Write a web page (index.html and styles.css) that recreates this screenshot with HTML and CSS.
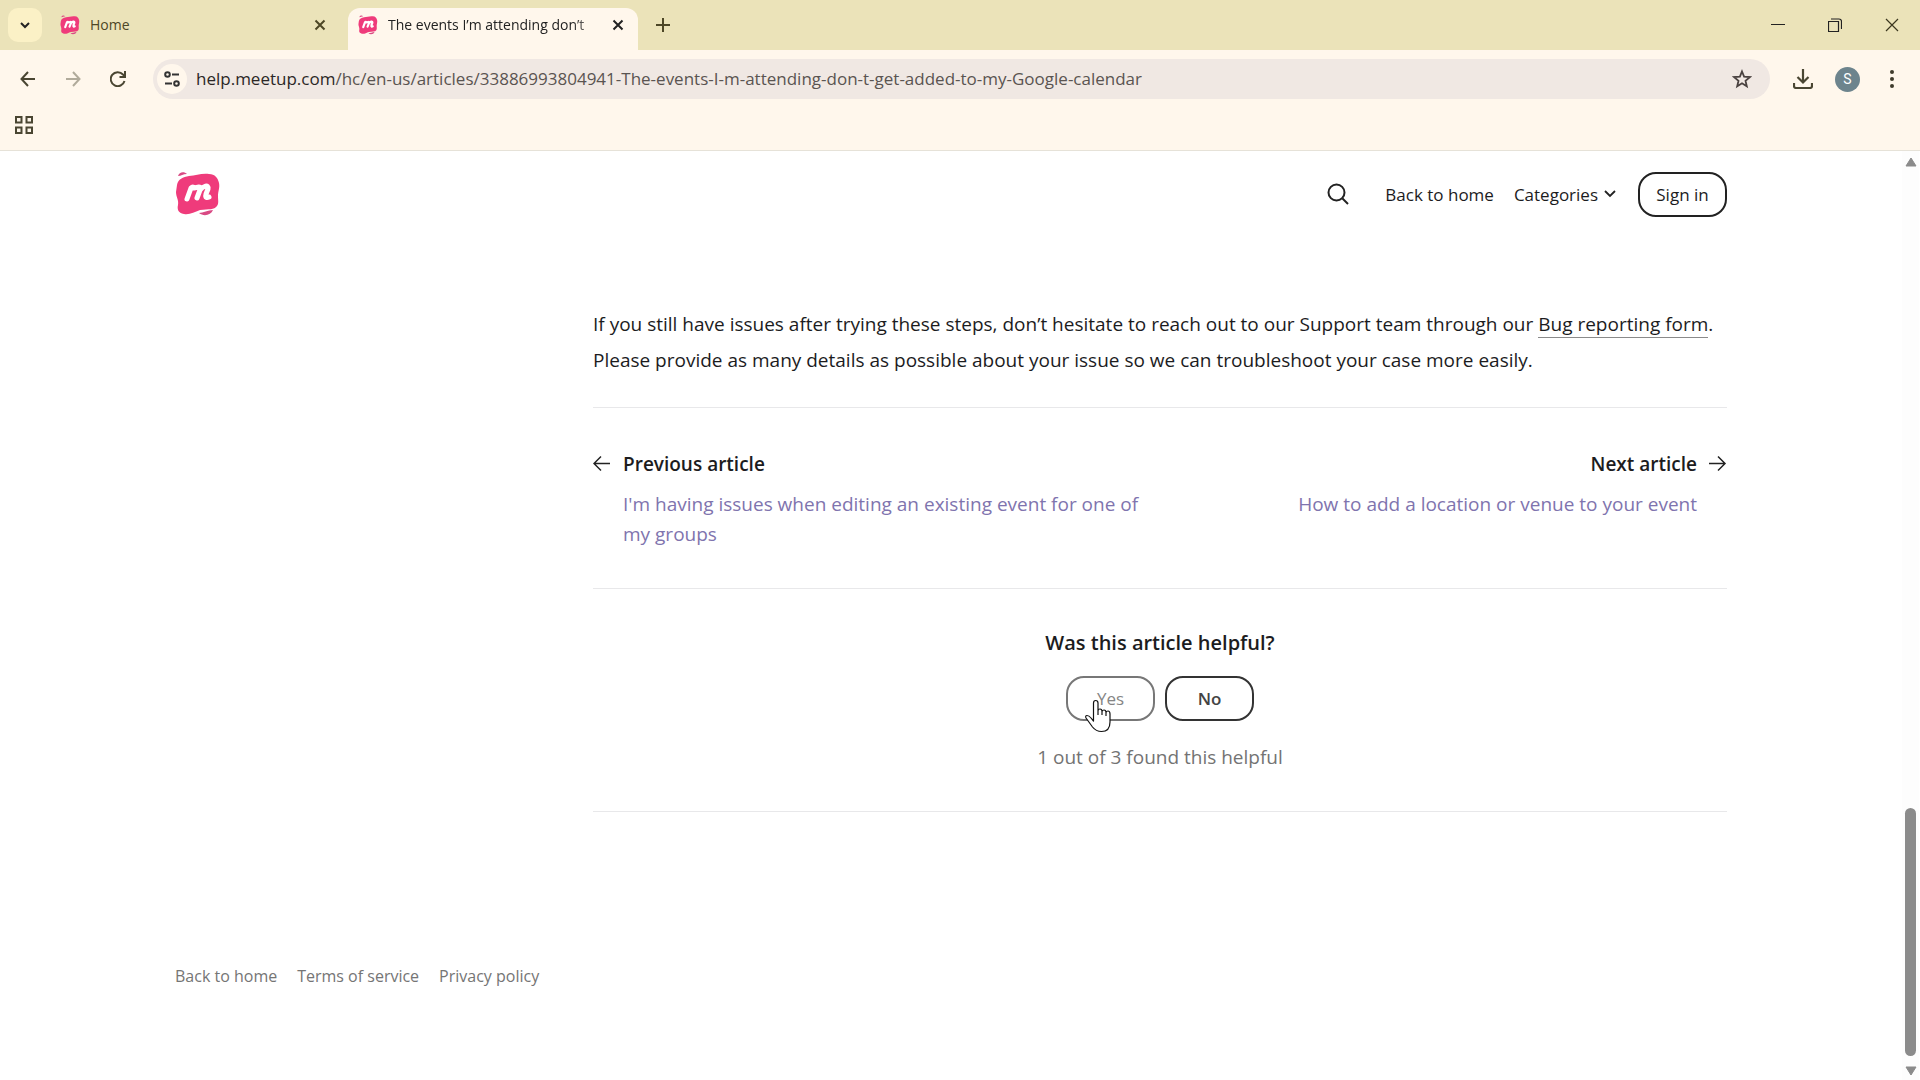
FILE: index.html
```html
<!DOCTYPE html>
<html lang="en">
<head>
<meta charset="utf-8">
<title>The events I’m attending don’t get added to my Google calendar</title>
<link rel="stylesheet" href="styles.css">
</head>
<body>
<svg class="defs" width="0" height="0" aria-hidden="true">
  <symbol id="logo" viewBox="0 0 46 46">
    <path fill="#ef3b7b" d="M2 14C3 8 8 6 14 5C21 5 26 2 34 3C40 3 43 7 44 12C45 17 43 20 43 25C43 30 44 32 42 35C39 39 34 38 25 39C19 41 15 44 9 43C3 42 2 38 3 34C4 29 1 26 1 21Z"/>
    <path fill="#d94a84" d="M3 5C4 1 9 0 12 3C8 3 6 5 3 5ZM24 42C28 42 33 39 38 39C36 44 29 46 24 42Z"/>
    <path fill="none" stroke="#fff" stroke-width="5" stroke-linecap="round" stroke-linejoin="round" d="M12 28L16 17Q18 15 19 17L24 16Q26 16 25 19L22 27M25 19C28 15 34 13 33 18L31 23C30 27 32 27 34 26"/>
  </symbol>
</svg>

<div class="browser">
  <header class="chrome">
    <div class="tabstrip">
      <button class="tab-search" aria-label="Search tabs"><svg width="12" height="12" viewBox="0 0 12 12"><path d="M2 4l4 4 4-4" fill="none" stroke="#222" stroke-width="2"/></svg></button>
      <div class="tab">
        <svg class="favicon"><use href="#logo"/></svg>
        <span class="tab-title">Home</span>
        <button class="tab-close" aria-label="Close Home"><svg width="12" height="12" viewBox="0 0 12 12"><path d="M1.500 1.500l9 9m0-9l-9 9" stroke="#4d4726" stroke-width="2"/></svg></button>
      </div>
      <div class="tab tab-active">
        <svg class="favicon"><use href="#logo"/></svg>
        <span class="tab-title">The events I’m attending don’t</span>
        <button class="tab-close" aria-label="Close tab"><svg width="12" height="12" viewBox="0 0 12 12"><path d="M1.500 1.500l9 9m0-9l-9 9" stroke="#222" stroke-width="2"/></svg></button>
      </div>
      <button class="new-tab" aria-label="New tab"><svg width="14" height="14" viewBox="0 0 14 14"><path d="M7 0v14M0 7h14" stroke="#4d4726" stroke-width="2"/></svg></button>
      <div class="window-controls">
        <button aria-label="Minimize"><svg width="14" height="14" viewBox="0 0 14 14"><path d="M0 6.500h14" stroke="#222"/></svg></button>
        <button aria-label="Restore"><svg width="14" height="14" viewBox="0 0 14 14"><path d="M.5 3.500h10v10H.5zM3 1h8q2.500 0 2.500 2.500V11" fill="none" stroke="#222" stroke-width="1.200"/></svg></button>
        <button aria-label="Close"><svg width="14" height="14" viewBox="0 0 14 14"><path d="M1 1l12 12M13 1L1 13" stroke="#3b371f" stroke-width="1.200"/></svg></button>
      </div>
    </div>
    <div class="toolbar">
      <button aria-label="Back"><svg width="16" height="16" viewBox="0 0 16 16"><path d="M15 8H2M8 1L1.500 8 8 15" fill="none" stroke="#4a4632" stroke-width="2"/></svg></button>
      <button aria-label="Forward"><svg width="16" height="16" viewBox="0 0 16 16"><path d="M1 8h13M8 1l6.500 7L8 15" fill="none" stroke="#b1ab9b" stroke-width="2"/></svg></button>
      <button aria-label="Reload"><svg width="16" height="16" viewBox="0 0 16 16"><path d="M14.500 10A7 7 0 1 1 13 3.500L14.500 5M15 0v6H9.500" fill="none" stroke="#4a4632" stroke-width="2"/></svg></button>
      <div class="omnibox">
        <button class="site-info" aria-label="Site information"><svg width="16" height="16" viewBox="0 0 16 16"><g fill="none" stroke="#333" stroke-width="2"><circle cx="3.500" cy="3.500" r="2.300"/><circle cx="12.500" cy="12.500" r="2.300"/><path d="M8 3.500h7M1 12.500h7"/></g></svg></button>
        <a class="url" href="#article"><span>help.meetup.com</span>/hc/en-us/articles/33886993804941-The-events-I-m-attending-don-t-get-added-to-my-Google-calendar</a>
        <button class="bookmark" aria-label="Bookmark this tab"><svg width="20" height="20" viewBox="0 0 20 20"><path d="M10 2.500l2.100 5.200 5.700.4-4.300 3.700 1.300 5.500L10 14.300l-4.800 3 1.300-5.500L2.200 8.100l5.700-.4z" fill="none" stroke="#4a4240" stroke-width="1.800"/></svg></button>
      </div>
      <button class="download" aria-label="Downloads"><svg width="20" height="20" viewBox="0 0 20 20"><path d="M10 0v13M4.500 8l5.500 5.500L15.500 8M1 14v3q0 2 2 2h14q2 0 2-2v-3" fill="none" stroke="#4a4632" stroke-width="2.200"/></svg></button>
      <button class="avatar" aria-label="Profile">S</button>
      <button class="menu" aria-label="Menu"><svg width="6" height="18" viewBox="0 0 6 18"><g fill="#3f3b2c"><circle cx="3" cy="2" r="2"/><circle cx="3" cy="9" r="2"/><circle cx="3" cy="16" r="2"/></g></svg></button>
    </div>
    <div class="bookmarks">
      <button aria-label="Apps"><svg width="18" height="18" viewBox="0 0 18 18"><path d="M1 1h5.500v5.500H1zM11.500 1H17v5.500h-5.500zM1 11.500h5.500V17H1zM11.500 11.500H17V17h-5.500z" fill="none" stroke="#4a4632" stroke-width="2"/></svg></button>
    </div>
  </header>

  <div class="viewport">
    <div class="page">
      <div class="site-header wrap">
        <a class="brand" href="#home" aria-label="Meetup"><svg width="46" height="46"><use href="#logo"/></svg></a>
        <nav class="site-nav">
          <button class="search" aria-label="Search"><svg width="22" height="22" viewBox="0 0 22 22"><path d="M15.500 15.500L21 21" stroke="#222" stroke-width="2"/><circle cx="9.500" cy="9.500" r="8" fill="none" stroke="#222" stroke-width="2"/></svg></button>
          <a href="#home">Back to home</a>
          <button class="categories">Categories <svg width="12" height="8" viewBox="0 0 12 8"><path d="M1 1l5 5 5-5" fill="none" stroke="#222" stroke-width="1.800"/></svg></button>
          <button class="pill">Sign in</button>
        </nav>
      </div>
      <main class="wrap">
        <article class="article" id="article">
          <p class="body-text">If you still have issues after trying these steps, don’t hesitate to reach out to our Support team through our <a href="#bug">Bug reporting form</a>.<br>Please provide as many details as possible about your issue so we can troubleshoot your case more easily.</p>
          <nav class="siblings" aria-label="Articles">
            <div class="sibling">
              <svg width="18" height="30" viewBox="0 0 18 30"><path d="M17 14.500H2M8 7.500l-7 7 7 7" fill="none" stroke="#222" stroke-width="1.500"/></svg>
              <div><h2>Previous article</h2><a href="#previous">I'm having issues when editing an existing event for one of<br>my groups</a></div>
            </div>
            <div class="sibling next">
              <div><h2>Next article</h2><a href="#next">How to add a location or venue to your event</a></div>
              <svg width="18" height="30" viewBox="0 0 18 30"><path d="M0 14.500h15M9 7.500l7 7-7 7" fill="none" stroke="#222" stroke-width="1.500"/></svg>
            </div>
          </nav>
          <section class="vote">
            <h2>Was this article helpful?</h2>
            <div class="vote-buttons">
              <button class="pill yes">Yes
                <svg class="pointer" width="27" height="34" viewBox="0 0 27 34"><path d="M9.500 22V4Q9.500 1.500 11.700 1.500Q14 1.500 14 4V12Q14 10 16 10Q18 10 18 12.500Q18.500 11 20 11Q22 11 22 13.500Q22.500 12 24 12Q26 12 26 15V23Q26 32.500 17.500 32.500Q12 32.500 8.500 28L2 19Q1 16.500 3 16.500Q5 16.500 7 19ZM14 11v5M18 12v4M22 13v4" fill="#fff" stroke="#111" stroke-width="1.200" stroke-linejoin="round"/></svg>
              </button>
              <button class="pill no">No</button>
            </div>
            <p>1 out of 3 found this helpful</p>
          </section>
        </article>
      </main>
      <footer class="site-footer wrap">
        <a href="#home">Back to home</a><a href="#terms">Terms of service</a><a href="#privacy">Privacy policy</a>
      </footer>
    </div>
    <div class="scrollbar" aria-hidden="true">
      <svg width="12" height="10" viewBox="0 0 12 10"><path d="M6 1l5 8H1z" fill="#8b8b8b" stroke="#8b8b8b" stroke-linejoin="round"/></svg>
      <div class="track"><div class="thumb"></div></div>
      <svg width="12" height="10" viewBox="0 0 12 10"><path d="M6 9l5-8H1z" fill="#8b8b8b" stroke="#8b8b8b" stroke-linejoin="round"/></svg>
    </div>
  </div>
</div>
</body>
</html>
```
FILE: styles.css
```css
* { box-sizing: border-box; }
body { margin: 0; color: #1c1c1e; font-family: "Open Sans", "Noto Sans", sans-serif; background: #fff; }
button { padding: 0; border: 0; background: none; color: inherit; font: inherit; display: flex; align-items: center; justify-content: center; flex: none; }
a { color: inherit; text-decoration: none; }
h2, p { margin: 0; }
svg { flex: none; display: block; }
.defs { position: absolute; }

.browser { min-height: 100vh; display: flex; flex-direction: column; }
.chrome { background: #fff7ec; border-bottom: 1px solid #e6e2d8; }
.tabstrip { height: 50px; padding-left: 8px; display: flex; background: #ebe3b9; }
.tab-search { width: 34px; height: 34px; margin-top: 8px; border-radius: 10px; background: #fbf1c6; }
.tab { width: 290px; height: 42px; margin-top: 8px; padding: 0 10px 8px; display: flex; align-items: center; gap: 10px; border-radius: 12px 12px 0 0; font-size: 14px; color: #4d4726; }
.tab:not(.tab-active) { margin: 8px 8px 0; }
.favicon { width: 20px; height: 20px; }
.tab-title { flex: 1; white-space: nowrap; line-height: 24px; }
.tab-active { background: #fff7ec; color: #222; }
.tab-active .tab-title { -webkit-mask-image: linear-gradient(90deg, #000 88%, #0005); mask-image: linear-gradient(90deg, #000 88%, #0005); }
.tab-close { width: 20px; height: 20px; }
.new-tab { width: 50px; }
.window-controls { margin-left: auto; display: flex; }
.window-controls button { width: 57px; }

.toolbar { height: 58px; padding: 0 18px; display: flex; align-items: center; }
.toolbar > button { width: 20px; height: 36px; margin-right: 25px; }
.omnibox { flex: 1; height: 40px; padding: 0 18px 0 4px; display: flex; align-items: center; border-radius: 20px; background: #f0e8e3; }
.site-info { width: 30px; height: 30px; border-radius: 50%; background: #fff7ec; }
.url { flex: 1; min-width: 0; margin-left: 9px; overflow: hidden; white-space: nowrap; font-size: 17px; line-height: 28px; color: #5a5451; }
.url span { color: #2b2726; }
.toolbar > .download { margin: 0 22px 0 23px; }
.toolbar > .avatar { width: 25px; height: 25px; margin-right: 20px; border-radius: 50%; background: #6d848d; color: #fff; font-family: Roboto, sans-serif; font-size: 14px; }
.toolbar > .menu { width: 24px; margin-right: -2px; }
.bookmarks { height: 42px; padding: 0 15px; display: flex; align-items: center; }
.bookmarks button { margin-bottom: 8px; }

.viewport { flex: 1; display: flex; }
.page { flex: 1; min-width: 0; display: flex; flex-direction: column; }
.wrap { width: 100%; max-width: 1616px; margin: 0 auto; padding: 0 32px; }
.site-header { height: 86px; display: flex; align-items: center; justify-content: space-between; }
.site-nav { display: flex; align-items: center; font-size: 17px; font-weight: 500; }
.search { margin-right: 36px; }
.categories { gap: 6px; margin: 0 22px 0 20px; }
.pill { width: 89px; height: 45px; border: 2px solid #222; border-radius: 18px; }
.article { margin-left: auto; width: 1134px; max-width: 100%; }
.body-text { padding: 69px 0 29px; font-size: 19px; line-height: 36px; }
.body-text a { border-bottom: 1px solid #8a8a8a; }
.siblings { display: flex; justify-content: space-between; padding: 41px 0 39px; border: 1px solid #e8e8ea; border-width: 1px 0; }
.sibling { display: flex; gap: 12px; font-size: 19px; line-height: 30px; color: #7f74ae; }
.sibling h2 { margin-bottom: 10px; font-size: 19px; font-weight: 600; line-height: 30px; color: #1c1c1e; }
.next { text-align: right; }
.vote { display: flex; flex-direction: column; align-items: center; padding: 38px 0; border-bottom: 1px solid #e8e8ea; }
.vote h2 { font-size: 20px; font-weight: 600; line-height: 32px; }
.vote-buttons { display: flex; gap: 10px; margin: 17px 0 20px; font-size: 17px; font-weight: 500; }
.vote p { font-size: 19px; line-height: 32px; color: #737373; }
.yes { position: relative; color: #858585; border-color: #777; }
.no { color: #444; border-color: #333; font-weight: 600; }
.pointer { position: absolute; left: 16px; top: 21px; }
.site-footer { display: flex; gap: 20px; margin-top: auto; padding-top: 80px; padding-bottom: 88px; font-size: 16px; line-height: 32px; color: #757575; }

.scrollbar { width: 17px; margin-right: 1px; padding: 6px 0 4px; display: flex; flex-direction: column; align-items: center; background: #fdfdfd; }
.track { flex: 1; width: 11px; padding: 3px 0 10px; display: flex; flex-direction: column; justify-content: flex-end; }
.thumb { height: 28%; border-radius: 6px; background: #8b8b8b; }
```
